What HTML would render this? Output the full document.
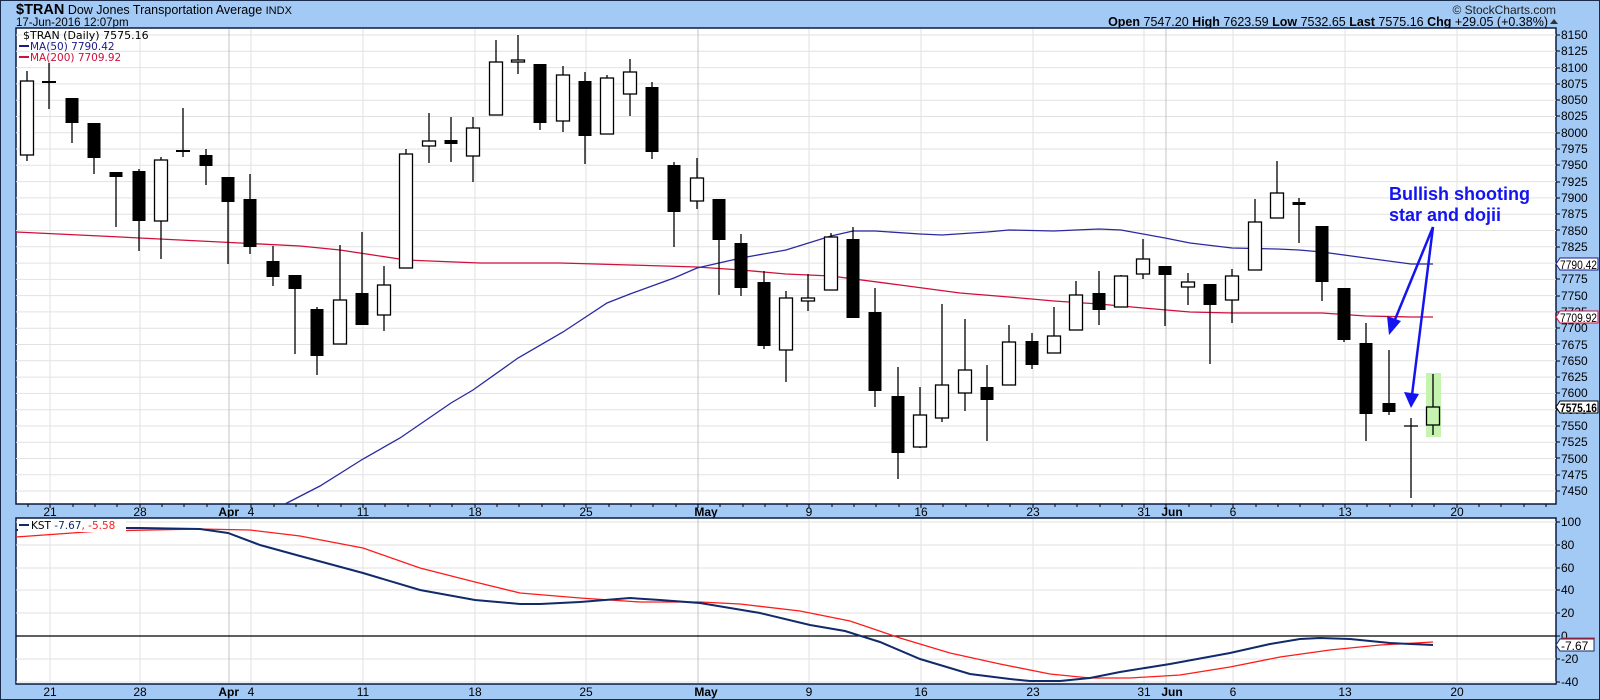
<!DOCTYPE html>
<html><head><meta charset="utf-8"><style>
body{margin:0;width:1600px;height:700px;overflow:hidden;background:#a3c9f5;font-family:"Liberation Sans",Arial,sans-serif}
svg{display:block}
</style></head><body>
<svg width="1600" height="700" xmlns="http://www.w3.org/2000/svg" font-family="Liberation Sans, Arial, sans-serif">
<rect x="0" y="0" width="1600" height="700" fill="#a3c9f5" stroke="#1a2a4a" stroke-width="2"/>
<text x="16" y="14" fill="#000" xml:space="preserve"><tspan font-size="14.5" font-weight="bold">$TRAN</tspan><tspan font-size="12.5"> Dow Jones Transportation Average </tspan><tspan font-size="11">INDX</tspan></text>
<text x="16" y="26" font-size="11.5" fill="#000">17-Jun-2016 12:07pm</text>
<text x="1556" y="14" font-size="12" fill="#222" text-anchor="end">© StockCharts.com</text>
<text x="1548" y="26" font-size="12.5" fill="#000" text-anchor="end"><tspan font-weight="bold">Open</tspan> 7547.20  <tspan font-weight="bold">High</tspan> 7623.59  <tspan font-weight="bold">Low</tspan> 7532.65  <tspan font-weight="bold">Last</tspan> 7575.16  <tspan font-weight="bold">Chg</tspan> +29.05 (+0.38%)</text>
<polygon points="1550,24 1554,19 1558,24" fill="#333"/>

<rect x="16" y="28" width="1540" height="476" fill="#fff" stroke="#0a1a40" stroke-width="1.5"/>
<g stroke="#e2e2e2" stroke-width="1">
<line x1="16" x2="1556" y1="35" y2="35"/><line x1="16" x2="1556" y1="51.3" y2="51.3"/><line x1="16" x2="1556" y1="67.6" y2="67.6"/><line x1="16" x2="1556" y1="83.9" y2="83.9"/><line x1="16" x2="1556" y1="100.2" y2="100.2"/><line x1="16" x2="1556" y1="116.5" y2="116.5"/><line x1="16" x2="1556" y1="132.7" y2="132.7"/><line x1="16" x2="1556" y1="149" y2="149"/><line x1="16" x2="1556" y1="165.3" y2="165.3"/><line x1="16" x2="1556" y1="181.6" y2="181.6"/><line x1="16" x2="1556" y1="197.9" y2="197.9"/><line x1="16" x2="1556" y1="214.2" y2="214.2"/><line x1="16" x2="1556" y1="230.5" y2="230.5"/><line x1="16" x2="1556" y1="246.8" y2="246.8"/><line x1="16" x2="1556" y1="263.1" y2="263.1"/><line x1="16" x2="1556" y1="279.4" y2="279.4"/><line x1="16" x2="1556" y1="295.6" y2="295.6"/><line x1="16" x2="1556" y1="311.9" y2="311.9"/><line x1="16" x2="1556" y1="328.2" y2="328.2"/><line x1="16" x2="1556" y1="344.5" y2="344.5"/><line x1="16" x2="1556" y1="360.8" y2="360.8"/><line x1="16" x2="1556" y1="377.1" y2="377.1"/><line x1="16" x2="1556" y1="393.4" y2="393.4"/><line x1="16" x2="1556" y1="409.7" y2="409.7"/><line x1="16" x2="1556" y1="426" y2="426"/><line x1="16" x2="1556" y1="442.3" y2="442.3"/><line x1="16" x2="1556" y1="458.5" y2="458.5"/><line x1="16" x2="1556" y1="474.8" y2="474.8"/><line x1="16" x2="1556" y1="491" y2="491"/>
<line x1="50" x2="50" y1="29" y2="503"/><line x1="140" x2="140" y1="29" y2="503"/><line x1="251" x2="251" y1="29" y2="503"/><line x1="363" x2="363" y1="29" y2="503"/><line x1="475" x2="475" y1="29" y2="503"/><line x1="586" x2="586" y1="29" y2="503"/><line x1="809" x2="809" y1="29" y2="503"/><line x1="921" x2="921" y1="29" y2="503"/><line x1="1033" x2="1033" y1="29" y2="503"/><line x1="1144" x2="1144" y1="29" y2="503"/><line x1="1233" x2="1233" y1="29" y2="503"/><line x1="1345" x2="1345" y1="29" y2="503"/><line x1="1457" x2="1457" y1="29" y2="503"/>
</g>
<g stroke="#c4c4c4"><line x1="229" x2="229" y1="29" y2="503"/><line x1="698" x2="698" y1="29" y2="503"/><line x1="1166" x2="1166" y1="29" y2="503"/></g>

<polyline fill="none" stroke="#d0103a" stroke-width="1.3" points="16,232 100,236 200,241 300,246 340,250 406,260 430,261 480,263 560,263 630,265 697,267 741,270 786,274 831,276 900,285 960,293 1009,297 1054,301 1099,304 1143,308 1190,312 1232,313 1277,313 1322,313 1366,316 1411,317 1433,317"/>
<polyline fill="none" stroke="#2a2aa0" stroke-width="1.3" points="285,504 320,486 363,459 400,438 451,403 473,390 518,358 563,332 607,303 630,294 652,286 674,278 697,268 741,258 786,250 831,236 853,231 875,231 920,234 942,235 987,232 1009,230 1054,231 1076,230 1099,229 1121,230 1143,234 1165,238 1190,243 1232,248 1277,249 1299,250 1322,252 1366,258 1411,264 1433,264"/>

<rect x="1426" y="373" width="15" height="64" fill="#c4f4b0"/>

<g stroke="#000" stroke-width="1.3">
<line x1="27" x2="27" y1="71" y2="161"/><line x1="49" x2="49" y1="63" y2="109"/><line x1="72" x2="72" y1="98" y2="143"/><line x1="94" x2="94" y1="123" y2="174"/><line x1="116" x2="116" y1="172" y2="227"/><line x1="139" x2="139" y1="169" y2="251"/><line x1="161" x2="161" y1="157" y2="259"/><line x1="183" x2="183" y1="108" y2="157"/><line x1="206" x2="206" y1="149" y2="185"/><line x1="228" x2="228" y1="177" y2="264"/><line x1="250" x2="250" y1="174" y2="254"/><line x1="273" x2="273" y1="246" y2="286"/><line x1="295" x2="295" y1="275" y2="354"/><line x1="317" x2="317" y1="307" y2="375"/><line x1="340" x2="340" y1="245" y2="344"/><line x1="362" x2="362" y1="232" y2="325"/><line x1="384" x2="384" y1="266" y2="331"/><line x1="406" x2="406" y1="149" y2="268"/>
<line x1="429" x2="429" y1="113" y2="163"/><line x1="451" x2="451" y1="117" y2="162"/><line x1="473" x2="473" y1="117" y2="182"/><line x1="496" x2="496" y1="40" y2="115"/><line x1="518" x2="518" y1="35" y2="74"/><line x1="540" x2="540" y1="64" y2="130"/><line x1="563" x2="563" y1="66" y2="132"/><line x1="585" x2="585" y1="72" y2="164"/><line x1="607" x2="607" y1="75" y2="134"/><line x1="630" x2="630" y1="59" y2="116"/><line x1="652" x2="652" y1="82" y2="159"/><line x1="674" x2="674" y1="162" y2="247"/><line x1="697" x2="697" y1="158" y2="209"/><line x1="719" x2="719" y1="199" y2="295"/><line x1="741" x2="741" y1="234" y2="296"/><line x1="764" x2="764" y1="271" y2="349"/><line x1="786" x2="786" y1="291" y2="382"/>
<line x1="808" x2="808" y1="274" y2="311"/><line x1="831" x2="831" y1="233" y2="290"/><line x1="853" x2="853" y1="227" y2="318"/><line x1="875" x2="875" y1="288" y2="407"/><line x1="898" x2="898" y1="367" y2="479"/><line x1="920" x2="920" y1="387" y2="448"/><line x1="942" x2="942" y1="304" y2="422"/><line x1="965" x2="965" y1="319" y2="411"/><line x1="987" x2="987" y1="365" y2="441"/><line x1="1009" x2="1009" y1="325" y2="385"/><line x1="1032" x2="1032" y1="333" y2="369"/><line x1="1054" x2="1054" y1="307" y2="353"/><line x1="1076" x2="1076" y1="281" y2="330"/><line x1="1099" x2="1099" y1="271" y2="325"/><line x1="1121" x2="1121" y1="275" y2="307"/><line x1="1143" x2="1143" y1="239" y2="279"/><line x1="1165" x2="1165" y1="266" y2="326"/>
<line x1="1188" x2="1188" y1="273" y2="305"/><line x1="1210" x2="1210" y1="284" y2="364"/><line x1="1232" x2="1232" y1="269" y2="323"/><line x1="1255" x2="1255" y1="199" y2="270"/><line x1="1277" x2="1277" y1="161" y2="218"/><line x1="1299" x2="1299" y1="198" y2="243"/><line x1="1322" x2="1322" y1="226" y2="301"/><line x1="1344" x2="1344" y1="288" y2="342"/><line x1="1366" x2="1366" y1="323" y2="441"/><line x1="1389" x2="1389" y1="350" y2="415"/><line x1="1411" x2="1411" y1="418" y2="498"/><line x1="1433" x2="1433" y1="374" y2="435"/>
<line x1="1404" x2="1418" y1="426" y2="426"/><line x1="42" x2="56" y1="82" y2="82" stroke-width="2"/><line x1="176" x2="190" y1="151" y2="151" stroke-width="2"/>
</g>
<g fill="#000">
<rect x="65.5" y="98" width="13" height="25"/><rect x="87.5" y="123" width="13" height="35"/><rect x="109.5" y="172" width="13" height="5"/><rect x="132.5" y="171" width="13" height="50"/><rect x="199.5" y="155" width="13" height="11"/><rect x="221.5" y="177" width="13" height="25"/><rect x="243.5" y="199" width="13" height="48"/><rect x="266.5" y="261" width="13" height="16"/><rect x="288.5" y="275" width="13" height="14"/><rect x="310.5" y="309" width="13" height="47"/><rect x="355.5" y="293" width="13" height="32"/>
<rect x="444.5" y="140" width="13" height="4"/><rect x="533.5" y="64" width="13" height="59"/><rect x="578.5" y="81" width="13" height="55"/><rect x="645.5" y="87" width="13" height="65"/><rect x="667.5" y="165" width="13" height="47"/><rect x="712.5" y="199" width="13" height="41"/><rect x="734.5" y="243" width="13" height="45"/><rect x="757.5" y="282" width="13" height="64"/>
<rect x="846.5" y="239" width="13" height="79"/><rect x="868.5" y="312" width="13" height="79"/><rect x="891.5" y="396" width="13" height="57"/><rect x="980.5" y="387" width="13" height="13"/><rect x="1025.5" y="341" width="13" height="24"/><rect x="1092.5" y="293" width="13" height="17"/><rect x="1158.5" y="266" width="13" height="9"/>
<rect x="1203.5" y="284" width="13" height="21"/><rect x="1292.5" y="202" width="13" height="3"/><rect x="1315.5" y="226" width="13" height="56"/><rect x="1337.5" y="288" width="13" height="52"/><rect x="1359.5" y="343" width="13" height="71"/><rect x="1382.5" y="403" width="13" height="9"/>
</g>
<g fill="#fff" stroke="#000" stroke-width="1.3">
<rect x="20.5" y="81" width="13" height="74"/><rect x="154.5" y="160" width="13" height="61"/><rect x="333.5" y="300" width="13" height="44"/><rect x="377.5" y="285" width="13" height="30"/><rect x="399.5" y="154" width="13" height="114"/>
<rect x="422.5" y="141" width="13" height="5"/><rect x="466.5" y="128" width="13" height="28"/><rect x="489.5" y="62" width="13" height="53"/><rect x="511.5" y="60" width="13" height="2"/><rect x="556.5" y="75" width="13" height="46"/><rect x="600.5" y="78" width="13" height="56"/><rect x="623.5" y="72" width="13" height="22"/><rect x="690.5" y="178" width="13" height="23"/><rect x="779.5" y="298" width="13" height="52"/>
<rect x="801.5" y="298" width="13" height="3"/><rect x="824.5" y="237" width="13" height="53"/><rect x="913.5" y="415" width="13" height="32"/><rect x="935.5" y="385" width="13" height="33"/><rect x="958.5" y="370" width="13" height="23"/><rect x="1002.5" y="342" width="13" height="43"/><rect x="1047.5" y="336" width="13" height="17"/><rect x="1069.5" y="295" width="13" height="35"/><rect x="1114.5" y="276" width="13" height="31"/><rect x="1136.5" y="259" width="13" height="15"/>
<rect x="1181.5" y="282" width="13" height="5"/><rect x="1225.5" y="276" width="13" height="24"/><rect x="1248.5" y="222" width="13" height="48"/><rect x="1270.5" y="193" width="13" height="25"/>
<rect x="1426.5" y="407" width="13" height="18" fill="#c4f4b0"/>
</g>

<text x="23" y="39" font-family="DejaVu Sans, sans-serif" font-size="11" fill="#000">$TRAN (Daily) 7575.16</text>
<line x1="19" x2="29" y1="46" y2="46" stroke="#1a1a8a" stroke-width="2"/>
<text x="30" y="50" font-family="DejaVu Sans, sans-serif" font-size="10.5" fill="#1a1a8a">MA(50) 7790.42</text>
<line x1="19" x2="29" y1="57" y2="57" stroke="#d0103a" stroke-width="2"/>
<text x="30" y="61" font-family="DejaVu Sans, sans-serif" font-size="10.5" fill="#d0103a">MA(200) 7709.92</text>

<g fill="#1414f0" font-weight="bold" font-size="18">
<text x="1389" y="200">Bullish shooting</text>
<text x="1389" y="221">star and dojii</text>
<text x="1164" y="576">Very fine balance</text>
</g>
<g stroke="#1414f0" stroke-width="2.5" fill="none"><line x1="1433" y1="227" x2="1394" y2="322"/><line x1="1433" y1="227" x2="1412" y2="395"/><line x1="1345" y1="601" x2="1378" y2="619"/></g>
<g fill="#1414f0"><polygon points="1389,335 1387,316 1401,321"/><polygon points="1411,408 1404,392 1419,394"/><polygon points="1390,625 1373,625 1381,613"/></g>

<g font-size="12" fill="#000" stroke="none">
<text x="1561" y="39">8150</text><text x="1561" y="55">8125</text><text x="1561" y="72">8100</text><text x="1561" y="88">8075</text><text x="1561" y="104">8050</text><text x="1561" y="120">8025</text><text x="1561" y="137">8000</text><text x="1561" y="153">7975</text><text x="1561" y="169">7950</text><text x="1561" y="186">7925</text><text x="1561" y="202">7900</text><text x="1561" y="218">7875</text><text x="1561" y="235">7850</text><text x="1561" y="251">7825</text><text x="1561" y="267">7800</text><text x="1561" y="283">7775</text><text x="1561" y="300">7750</text><text x="1561" y="316">7725</text><text x="1561" y="332">7700</text><text x="1561" y="349">7675</text><text x="1561" y="365">7650</text><text x="1561" y="381">7625</text><text x="1561" y="397">7600</text><text x="1561" y="414">7575</text><text x="1561" y="430">7550</text><text x="1561" y="446">7525</text><text x="1561" y="463">7500</text><text x="1561" y="479">7475</text><text x="1561" y="495">7450</text>
</g>
<g stroke="#000" stroke-width="1"><path d="M1556 35h4M1556 51h4M1556 68h4M1556 84h4M1556 100h4M1556 116h4M1556 133h4M1556 149h4M1556 165h4M1556 182h4M1556 198h4M1556 214h4M1556 230h4M1556 247h4M1556 263h4M1556 279h4M1556 296h4M1556 312h4M1556 328h4M1556 344h4M1556 361h4M1556 377h4M1556 393h4M1556 410h4M1556 426h4M1556 442h4M1556 458h4M1556 475h4M1556 491h4"/></g>
<g font-size="12">
<path d="M1556 264 l4 -6 h38 v12 h-38z" fill="#fff" stroke="#1a1a8a"/><text x="1560" y="269" fill="#000" textLength="37" lengthAdjust="spacingAndGlyphs">7790.42</text>
<path d="M1556 317 l4 -6 h38 v12 h-38z" fill="#fff" stroke="#d0103a"/><text x="1560" y="322" fill="#000" textLength="37" lengthAdjust="spacingAndGlyphs">7709.92</text>
<path d="M1556 407 l4 -6 h38 v12 h-38z" fill="#fff" stroke="#000"/><text x="1560" y="412" fill="#000" font-weight="bold" textLength="37" lengthAdjust="spacingAndGlyphs">7575.16</text>
</g>

<g stroke="#000" stroke-width="1"><path d="M28 504v3M50 504v4M73 504v3M95 504v3M117 504v3M140 504v4M162 504v3M184 504v3M207 504v3M229 504v4M251 504v4M274 504v3M296 504v3M318 504v3M341 504v3M363 504v4M385 504v3M408 504v3M430 504v3M452 504v3M475 504v4M497 504v3M519 504v3M542 504v3M564 504v3M586 504v4M609 504v3M631 504v3M653 504v3M676 504v3M698 504v4M720 504v3M743 504v3M765 504v3M787 504v3M809 504v4M832 504v3M854 504v3M876 504v3M899 504v3M921 504v4M943 504v3M966 504v3M988 504v3M1010 504v3M1033 504v4M1055 504v3M1077 504v3M1100 504v3M1122 504v3M1144 504v4M1166 504v4M1189 504v3M1211 504v3M1233 504v4M1256 504v3M1278 504v3M1300 504v3M1323 504v3M1345 504v4M1367 504v3M1390 504v3M1412 504v3M1434 504v3M1457 504v4M1479 504v3M1501 504v3M1524 504v3M1546 504v3"/></g>
<g font-size="12" fill="#000" text-anchor="middle">
<text x="50" y="516">21</text><text x="140" y="516">28</text><text x="229" y="516" font-weight="bold" text-anchor="end" dx="10">Apr</text><text x="251" y="516">4</text><text x="363" y="516">11</text><text x="475" y="516">18</text><text x="586" y="516">25</text><text x="698" y="516" font-weight="bold" dx="8">May</text><text x="809" y="516">9</text><text x="921" y="516">16</text><text x="1033" y="516">23</text><text x="1144" y="516">31</text><text x="1166" y="516" font-weight="bold" dx="6">Jun</text><text x="1233" y="516">6</text><text x="1345" y="516">13</text><text x="1457" y="516">20</text>
</g>

<rect x="16" y="518" width="1540" height="166" fill="#fff" stroke="#0a1a40" stroke-width="1.5"/>
<g stroke="#e2e2e2"><path d="M16 522H1556M16 545H1556M16 568H1556M16 590H1556M16 613H1556M16 659H1556M16 682H1556"/>
<path d="M50 519V683M140 519V683M251 519V683M363 519V683M475 519V683M586 519V683M809 519V683M921 519V683M1033 519V683M1144 519V683M1233 519V683M1345 519V683M1457 519V683"/></g>
<g stroke="#c4c4c4"><path d="M229 519V683M698 519V683M1166 519V683"/></g>
<line x1="16" x2="1556" y1="636" y2="636" stroke="#000" stroke-width="1.2"/>
<polyline fill="none" stroke="#ff1a1a" stroke-width="1.3" points="16,537 100,531 200,529 250,530 300,536 363,548 420,568 475,582 520,593 580,598 640,602 700,602 740,604 800,611 850,621 900,638 950,653 1000,664 1050,674 1090,678 1130,678 1180,675 1230,667 1280,657 1330,650 1380,645 1433,642"/>
<polyline fill="none" stroke="#102a6a" stroke-width="2" points="16,530 50,528 140,528 200,529 228,533 260,545 300,556 363,573 420,590 475,600 520,604 540,604 580,602 630,598 660,600 700,603 760,613 810,625 845,631 880,642 920,659 970,674 1010,679 1030,681 1060,681 1090,678 1120,672 1170,664 1230,653 1270,644 1300,639 1320,638 1350,639 1390,643 1433,645"/>
<rect x="18" y="520" width="108" height="12" fill="#fff"/>
<line x1="19" x2="29" y1="525" y2="525" stroke="#102a6a" stroke-width="2"/>
<text x="31" y="529" font-family="DejaVu Sans, sans-serif" font-size="10.5"><tspan fill="#000">KST</tspan><tspan fill="#102a6a"> -7.67</tspan><tspan fill="#ff1a1a">, -5.58</tspan></text>
<g font-size="12" fill="#000">
<text x="1561" y="526">100</text><text x="1561" y="549">80</text><text x="1561" y="572">60</text><text x="1561" y="594">40</text><text x="1561" y="617">20</text><text x="1561" y="640">0</text><text x="1561" y="663">-20</text><text x="1561" y="686">-40</text>
</g>
<g stroke="#000"><path d="M1556 522h4M1556 545h4M1556 568h4M1556 590h4M1556 613h4M1556 636h4M1556 659h4M1556 682h4"/></g>
<path d="M1556 645 l4 -6 h34 v12 h-34z" fill="#fff" stroke="#102a6a"/><text x="1561" y="650" font-size="12">-7.67</text>
<line x1="1561" x2="1595" y1="638" y2="638" stroke="#ff1a1a"/>
<g font-size="12" fill="#000" text-anchor="middle">
<text x="50" y="696">21</text><text x="140" y="696">28</text><text x="229" y="696" font-weight="bold" text-anchor="end" dx="10">Apr</text><text x="251" y="696">4</text><text x="363" y="696">11</text><text x="475" y="696">18</text><text x="586" y="696">25</text><text x="698" y="696" font-weight="bold" dx="8">May</text><text x="809" y="696">9</text><text x="921" y="696">16</text><text x="1033" y="696">23</text><text x="1144" y="696">31</text><text x="1166" y="696" font-weight="bold" dx="6">Jun</text><text x="1233" y="696">6</text><text x="1345" y="696">13</text><text x="1457" y="696">20</text>
</g>
</svg>
</body></html>
